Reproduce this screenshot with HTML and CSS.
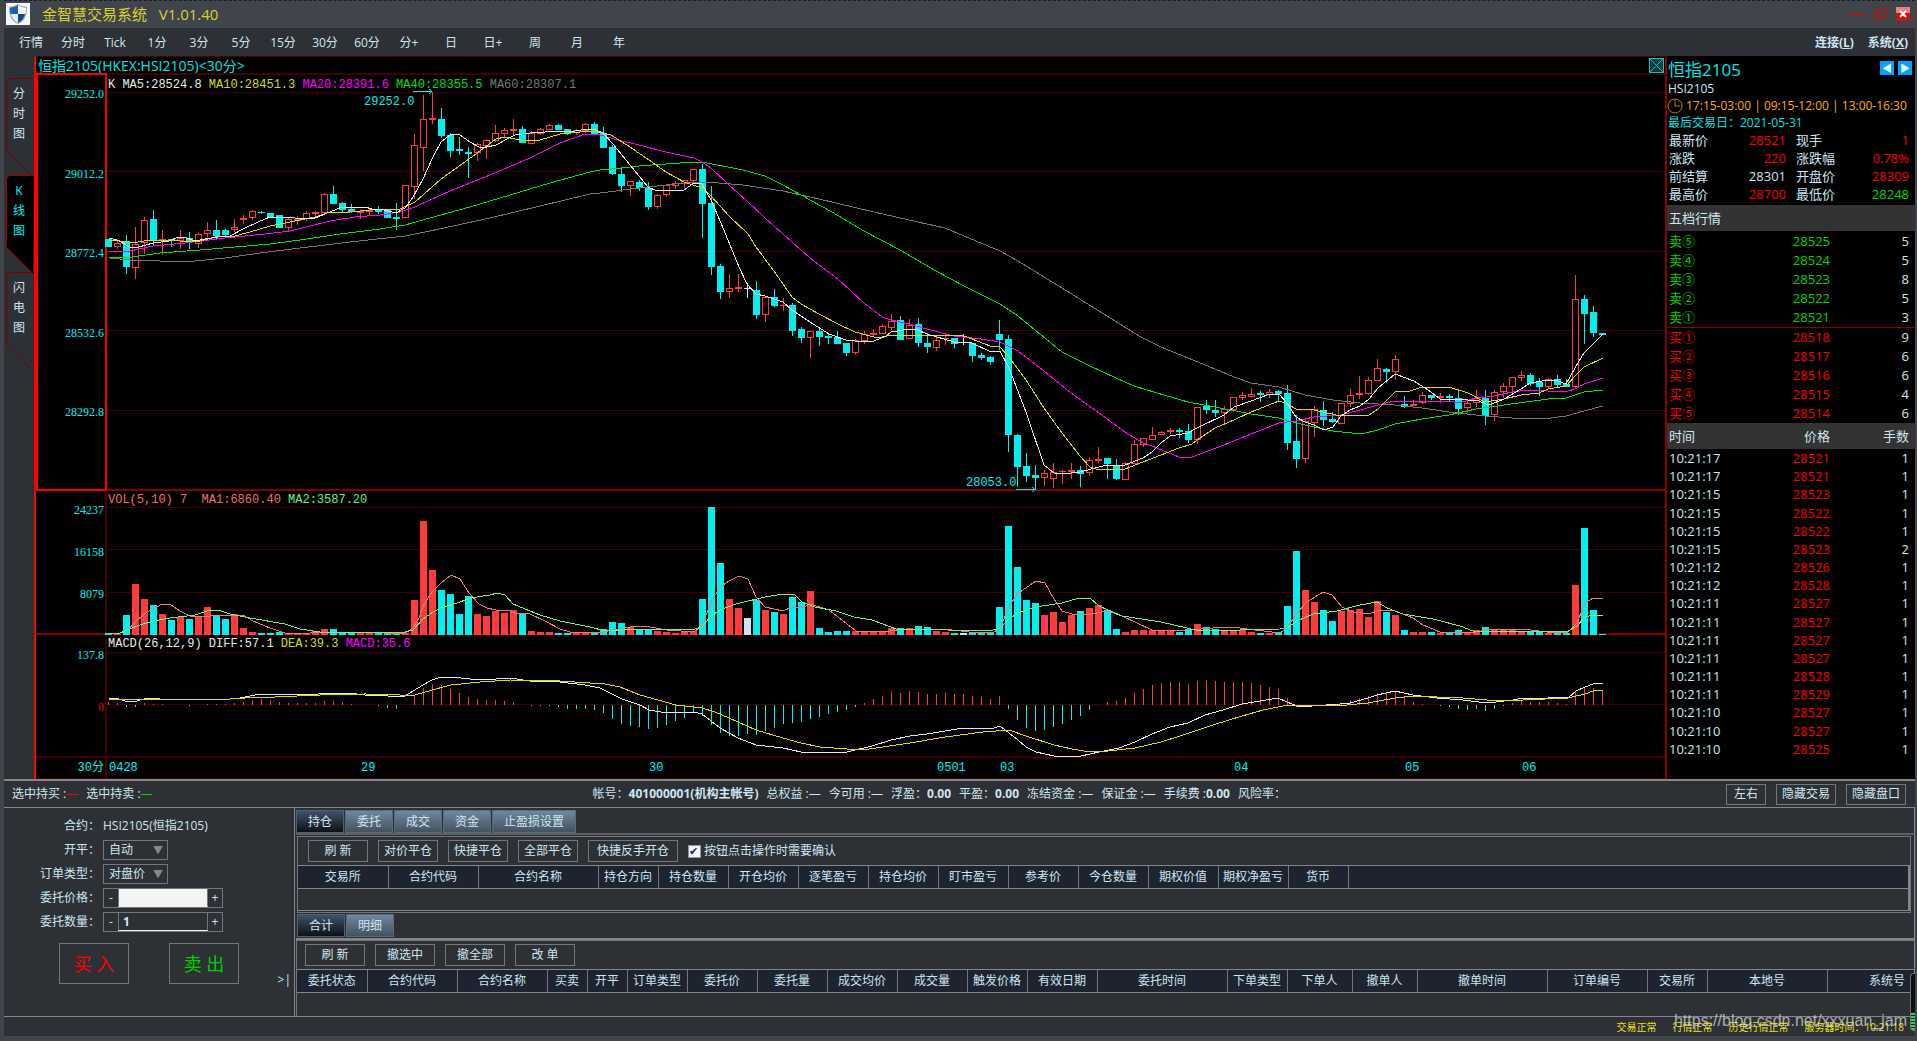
FILE: index.html
```html
<!DOCTYPE html>
<html lang="zh-CN">
<head>
    <meta charset="UTF-8">
    <meta name="viewport" content="width=device-width, initial-scale=1.0">
    <title>金智慧交易系统</title>
    <link rel="stylesheet" href="styles.css">
</head>
<body>
    <header class="titlebar">
        <svg class="logo" width="24" height="22" viewBox="0 0 24 22">
            <rect width="24" height="22" fill="#f4f6f8"/>
            <path d="M12 1 C9 3 6 3 3 4 C3 12 5 18 12 21 C19 18 21 12 21 4 C18 3 15 3 12 1Z" fill="#9aa7b4"/>
            <path d="M12 2 C9 4 7 4 4 5 C4 8 4 9 5 11 H12Z" fill="#1d5fae"/>
            <path d="M12 2 C15 4 17 4 20 5 C20 8 20 9 19 11 H12Z" fill="#f2f5f9"/>
            <path d="M12 11 H5 C6 15 8 18 12 20Z" fill="#e4ebf2"/>
            <path d="M12 11 H19 C18 15 16 18 12 20Z" fill="#16468c"/>
        </svg>
        <h1>金智慧交易系统 &nbsp; V1.01.40</h1>
        <div class="window-buttons">
            <button type="button" aria-label="最小化">
                <svg width="16" height="14"><path d="M0 8.5 H16" stroke="#e00000" stroke-width="1"/></svg>
            </button>
            <button type="button" aria-label="还原">
                <svg width="14" height="14" fill="none" stroke="#e00000"><path d="M3.5 6 V1.5 H12.5 V10.5 H8"/><rect x="1.5" y="6.5" width="6" height="6"/></svg>
            </button>
            <button type="button" aria-label="关闭">
                <svg width="14" height="14"><rect width="14" height="14" fill="#d01010"/><rect width="14" height="6" fill="#e88080"/><path d="M4 4 L10 10 M10 4 L4 10" stroke="#fff" stroke-width="2"/></svg>
            </button>
        </div>
    </header>

    <nav class="menubar">
        <div class="periods">
            <a href="#">行情</a><a href="#">分时</a><a href="#">Tick</a><a href="#">1分</a><a href="#">3分</a><a href="#">5分</a><a href="#">15分</a><a href="#">30分</a><a href="#">60分</a><a href="#">分+</a><a href="#">日</a><a href="#">日+</a><a href="#">周</a><a href="#">月</a><a href="#">年</a>
        </div>
        <div class="system-menu">
            <a href="#">连接(<u>L</u>)</a>
            <a href="#">系统(<u>X</u>)</a>
        </div>
    </nav>

    <main class="workspace">
        <div class="side-tabs">
            <button type="button" class="side-tab">
                <svg viewBox="0 0 28 100"><path d="M28 .5 H5 Q.5 .5 .5 5 V72 L27 99"/></svg>
                <span>分</span><span>时</span><span>图</span>
            </button>
            <button type="button" class="side-tab active">
                <svg viewBox="0 0 28 100"><path d="M28 .5 H5 Q.5 .5 .5 5 V72 L27 99"/></svg>
                <span>K</span><span>线</span><span>图</span>
            </button>
            <button type="button" class="side-tab">
                <svg viewBox="0 0 28 100"><path d="M28 .5 H5 Q.5 .5 .5 5 V72 L27 99"/></svg>
                <span>闪</span><span>电</span><span>图</span>
            </button>
        </div>

        <section class="chart">
            <div class="chart-title">
                <h2>恒指2105(HKEX:HSI2105)&lt;30分&gt;</h2>
                <button type="button" aria-label="关闭图表">
                    <svg width="15" height="15" fill="none" stroke="#00c8c8"><rect x=".5" y=".5" width="14" height="14" fill="#003c3c"/><path d="M1 1 L14 14 M14 1 L1 14"/></svg>
                </button>
            </div>
            <svg class="plot" id="plot" width="100%" height="706">
                <!-- 网格 -->
                <g class="grid">
                    <rect x="0" y="0" width="100%" height="2"/>
                    <rect x="71" y="19" width="100%" height="1"/>
                    <rect x="71" y="98" width="100%" height="1"/>
                    <rect x="71" y="178" width="100%" height="1"/>
                    <rect x="71" y="257" width="100%" height="1"/>
                    <rect x="71" y="337" width="100%" height="1"/>
                    <rect x="71" y="434" width="100%" height="1"/>
                    <rect x="71" y="476" width="100%" height="1"/>
                    <rect x="71" y="519" width="100%" height="1"/>
                    <rect x="71" y="579" width="100%" height="1"/>
                    <rect x="71" y="631" width="100%" height="1"/>
                    <rect x="0" y="683" width="100%" height="2"/>
                    <rect x="0" y="705" width="100%" height="1"/>
                    <rect x="69" y="418" width="2" height="288"/>
                </g>
                <g class="grid-strong">
                    <rect x="0" y="416" width="100%" height="2"/>
                    <rect x="0" y="560" width="100%" height="2"/>
                </g>
                <rect class="axis-box" x="1" y="1" width="69" height="416"/>

                <g class="scale">
                    <text x="68" y="25">29252.0</text>
                    <text x="68" y="105">29012.2</text>
                    <text x="68" y="184">28772.4</text>
                    <text x="68" y="264">28532.6</text>
                    <text x="68" y="343">28292.8</text>
                    <text x="68" y="441">24237</text>
                    <text x="68" y="483">16158</text>
                    <text x="68" y="525">8079</text>
                    <text x="68" y="586">137.8</text>
                    <text x="68" y="638" class="zero">0</text>
                </g>
                <g class="dates">
                    <text x="68" y="698" class="period">30分</text>
                    <text x="73" y="698">0428</text>
                    <text x="325" y="698">29</text>
                    <text x="613" y="698">30</text>
                    <text x="901" y="698">0501</text>
                    <text x="964" y="698">03</text>
                    <text x="1198" y="698">04</text>
                    <text x="1369" y="698">05</text>
                    <text x="1486" y="698">06</text>
                </g>

                <g class="legend">
                    <text x="72" y="15"><tspan class="t-white">K MA5:28524.8</tspan> <tspan class="t-yellow">MA10:28451.3</tspan> <tspan class="t-magenta">MA20:28391.6</tspan> <tspan class="t-green">MA40:28355.5</tspan> <tspan class="t-gray">MA60:28307.1</tspan></text>
                    <text x="72" y="430"><tspan class="t-vol1">VOL(5,10) 7&#160; MA1:6860.40</tspan> <tspan class="t-vol2">MA2:3587.20</tspan></text>
                    <text x="72" y="574"><tspan class="t-white">MACD(26,12,9) DIFF:57.1</tspan> <tspan class="t-yellow">DEA:39.3</tspan> <tspan class="t-magenta">MACD:35.6</tspan></text>
                </g>

                <!-- bars, candles and average lines are added by chart.js -->
                <g id="series" transform="translate(-36 -73)"></g>

                <g class="marks">
                    <text x="328" y="32">29252.0</text>
                    <path d="M377 18.5 H396 M393 16 L396 18.5 L393 21"/>
                    <text x="930" y="413">28053.0</text>
                    <path d="M980 416.5 H999 M996 414 L999 416.5 L996 419"/>
                </g>
            </svg>
        </section>

        <aside class="quote">
            <div class="quote-head">
                <h2>恒指2105</h2>
                <button type="button">◀</button>
                <button type="button">▶</button>
            </div>
            <p class="code">HSI2105</p>
            <p class="hours">
                <svg width="16" height="16" fill="none" stroke="#c08000"><circle cx="8" cy="8" r="7"/><path d="M8 2 V8 H13"/></svg>
                17:15-03:00 | 09:15-12:00 | 13:00-16:30
            </p>
            <p class="last-day">最后交易日：2021-05-31</p>
            <dl class="summary">
                <dt>最新价</dt><dd class="red">28521</dd><dt>现手</dt><dd class="red">1</dd>
                <dt>涨跌</dt><dd class="red">220</dd><dt>涨跌幅</dt><dd class="red">0.78%</dd>
                <dt>前结算</dt><dd>28301</dd><dt>开盘价</dt><dd class="red">28309</dd>
                <dt>最高价</dt><dd class="red">28700</dd><dt>最低价</dt><dd class="green">28248</dd>
            </dl>
            <h3>五档行情</h3>
            <table class="depth">
                <tbody class="sell">
                    <tr><td>卖⑤</td><td>28525</td><td>5</td></tr>
                    <tr><td>卖④</td><td>28524</td><td>5</td></tr>
                    <tr><td>卖③</td><td>28523</td><td>8</td></tr>
                    <tr><td>卖②</td><td>28522</td><td>5</td></tr>
                    <tr><td>卖①</td><td>28521</td><td>3</td></tr>
                </tbody>
                <tbody class="buy">
                    <tr><td>买①</td><td>28518</td><td>9</td></tr>
                    <tr><td>买②</td><td>28517</td><td>6</td></tr>
                    <tr><td>买③</td><td>28516</td><td>6</td></tr>
                    <tr><td>买④</td><td>28515</td><td>4</td></tr>
                    <tr><td>买⑤</td><td>28514</td><td>6</td></tr>
                </tbody>
            </table>
            <table class="ticks">
                <thead>
                    <tr><th>时间</th><th>价格</th><th>手数</th></tr>
                </thead>
                <tbody>
                    <tr><td>10:21:17</td><td>28521</td><td>1</td></tr>
                    <tr><td>10:21:17</td><td>28521</td><td>1</td></tr>
                    <tr><td>10:21:15</td><td>28523</td><td>1</td></tr>
                    <tr><td>10:21:15</td><td>28522</td><td>1</td></tr>
                    <tr><td>10:21:15</td><td>28522</td><td>1</td></tr>
                    <tr><td>10:21:15</td><td>28523</td><td>2</td></tr>
                    <tr><td>10:21:12</td><td>28526</td><td>1</td></tr>
                    <tr><td>10:21:12</td><td>28528</td><td>1</td></tr>
                    <tr><td>10:21:11</td><td>28527</td><td>1</td></tr>
                    <tr><td>10:21:11</td><td>28527</td><td>1</td></tr>
                    <tr><td>10:21:11</td><td>28527</td><td>1</td></tr>
                    <tr><td>10:21:11</td><td>28527</td><td>1</td></tr>
                    <tr><td>10:21:11</td><td>28528</td><td>1</td></tr>
                    <tr><td>10:21:11</td><td>28529</td><td>1</td></tr>
                    <tr><td>10:21:10</td><td>28527</td><td>1</td></tr>
                    <tr><td>10:21:10</td><td>28527</td><td>1</td></tr>
                    <tr><td>10:21:10</td><td>28525</td><td>1</td></tr>
                </tbody>
            </table>
        </aside>
    </main>

    <div class="account-bar">
        <div class="selected">
            <span>选中持买 :<i class="red">—</i></span>
            <span>选中持卖 :<i class="green">—</i></span>
        </div>
        <div class="account">
            <span>帐号：<b>401000001(机构主帐号)</b></span>
            <span>总权益 :—</span>
            <span>今可用 :—</span>
            <span>浮盈：<b>0.00</b></span>
            <span>平盈：<b>0.00</b></span>
            <span>冻结资金 :—</span>
            <span>保证金 :—</span>
            <span>手续费 :<b>0.00</b></span>
            <span>风险率：</span>
        </div>
        <div class="layout-buttons">
            <button type="button">左右</button>
            <button type="button">隐藏交易</button>
            <button type="button">隐藏盘口</button>
        </div>
    </div>

    <div class="trade">
        <form class="order">
            <div class="field">
                <span class="label">合约：</span>
                <span>HSI2105(恒指2105)</span>
            </div>
            <div class="field">
                <label for="offset">开平：</label>
                <div class="select"><select id="offset"><option>自动</option></select></div>
            </div>
            <div class="field">
                <label for="orderType">订单类型：</label>
                <div class="select"><select id="orderType"><option>对盘价</option></select></div>
            </div>
            <div class="field">
                <label for="price">委托价格：</label>
                <div class="stepper price"><button type="button">-</button><input type="text" id="price" value=""><button type="button">+</button></div>
            </div>
            <div class="field">
                <label for="volume">委托数量：</label>
                <div class="stepper"><button type="button">-</button><input type="text" id="volume" value="1"><button type="button">+</button></div>
            </div>
            <div class="order-buttons">
                <button type="button" class="btn-buy">买 入</button>
                <button type="button" class="btn-sell">卖 出</button>
            </div>
            <button type="button" class="collapse">&gt;|</button>
        </form>

        <div class="panels">
            <div class="tabs">
                <button type="button" class="tab active">持仓</button>
                <button type="button" class="tab">委托</button>
                <button type="button" class="tab">成交</button>
                <button type="button" class="tab">资金</button>
                <button type="button" class="tab wide">止盈损设置</button>
            </div>
            <div class="positions">
                <div class="toolbar">
                    <button type="button">刷 新</button>
                    <button type="button">对价平仓</button>
                    <button type="button">快捷平仓</button>
                    <button type="button">全部平仓</button>
                    <button type="button" class="long">快捷反手开仓</button>
                    <label class="confirm"><input type="checkbox" checked>按钮点击操作时需要确认</label>
                </div>
                <div class="table-box">
                    <table class="list">
                        <colgroup>
                            <col class="w90"><col class="w90"><col class="w120"><col class="w60"><col class="w70"><col class="w70"><col class="w70"><col class="w70"><col class="w70"><col class="w70"><col class="w70"><col class="w70"><col class="w70"><col class="w60"><col>
                        </colgroup>
                        <thead>
                            <tr><th>交易所</th><th>合约代码</th><th>合约名称</th><th>持仓方向</th><th>持仓数量</th><th>开仓均价</th><th>逐笔盈亏</th><th>持仓均价</th><th>盯市盈亏</th><th>参考价</th><th>今仓数量</th><th>期权价值</th><th>期权净盈亏</th><th>货币</th><th></th></tr>
                        </thead>
                    </table>
                </div>
            </div>
            <div class="tabs lower">
                <button type="button" class="tab active">合计</button>
                <button type="button" class="tab">明细</button>
            </div>
            <div class="orders">
                <div class="toolbar">
                    <button type="button">刷 新</button>
                    <button type="button">撤选中</button>
                    <button type="button">撤全部</button>
                    <button type="button">改 单</button>
                </div>
                <div class="table-scroll">
                    <table class="list orders-list">
                        <colgroup>
                            <col class="w70"><col class="w90"><col class="w90"><col class="w40"><col class="w40"><col class="w60"><col class="w70"><col class="w70"><col class="w70"><col class="w70"><col class="w60"><col class="w70"><col class="w130"><col class="w60"><col class="w65"><col class="w65"><col class="w130"><col class="w100"><col class="w60"><col class="w120"><col class="w120">
                        </colgroup>
                        <thead>
                            <tr><th>委托状态</th><th>合约代码</th><th>合约名称</th><th>买卖</th><th>开平</th><th>订单类型</th><th>委托价</th><th>委托量</th><th>成交均价</th><th>成交量</th><th>触发价格</th><th>有效日期</th><th>委托时间</th><th>下单类型</th><th>下单人</th><th>撤单人</th><th>撤单时间</th><th>订单编号</th><th>交易所</th><th>本地号</th><th>系统号</th></tr>
                        </thead>
                    </table>
                </div>
            </div>
        </div>
    </div>

    <footer class="statusbar">
        <span>交易正常</span>
        <span>行情正常</span>
        <span>历史行情正常</span>
        <span>服务器时间：10:21:18</span>
        <div class="watermark">https://blog.csdn.net/xxxuan_jam</div>
        <div class="meter"></div>
    </footer>

    <script src="chart.js"></script>
</body>
</html>
```

FILE: styles.css
```css
* {
    margin: 0;
    padding: 0;
    box-sizing: border-box;
}

body {
    font-family: "Open Sans", "Noto Sans CJK SC", sans-serif;
    font-size: 12px;
    line-height: 16px;
    color: #cfe6f2;
    background: #2d3035;
    min-height: 100vh;
    display: flex;
    flex-direction: column;
    border: 0 solid #40454c;
    border-width: 0 2px 5px 4px;
    overflow-x: hidden;
}

button, input, select {
    font: inherit;
    color: inherit;
    background: none;
    border: none;
    border-radius: 0;
}

button {
    cursor: pointer;
    white-space: nowrap;
}

a {
    color: inherit;
    text-decoration: none;
}

.red { color: #fa0000; }
.green { color: #00d800; }

/* title bar */
.titlebar {
    height: 28px;
    display: flex;
    align-items: center;
    background: #40454c;
    border-top: 1px dashed #1c1e22;
    padding: 0 5px 1px 2px;
}

.logo {
    margin-right: 12px;
}

.titlebar h1 {
    flex: 1;
    font-size: 15px;
    font-weight: normal;
    color: #dcd02c;
}

.window-buttons {
    display: flex;
    gap: 8px;
}

.window-buttons button, .chart-title button {
    display: flex;
}

.menubar {
    height: 28px;
    display: flex;
    align-items: center;
    justify-content: space-between;
    padding-top: 1px;
}

.periods {
    display: flex;
    padding-left: 6px;
}

.periods a {
    width: 42px;
    text-align: center;
}

.system-menu {
    display: flex;
    gap: 14px;
    padding-right: 7px;
    font-weight: bold;
}

/* workspace */
.workspace {
    flex: 1;
    display: flex;
    border-bottom: 2px solid #84878a;
}

.side-tabs {
    width: 30px;
    display: flex;
    flex-direction: column;
    padding: 22px 0 0 2px;
}

.side-tab {
    position: relative;
    height: 97px;
    display: flex;
    flex-direction: column;
    align-items: center;
    gap: 4px;
    padding: 8px 2px 0 0;
    width: 28px;
}

.side-tab svg {
    position: absolute;
    left: 0;
    top: 0;
    width: 28px;
    height: 100px;
    fill: #2d3035;
    stroke: #7c0000;
}

.side-tab span {
    position: relative;
}

.side-tab.active {
    color: #00f0f0;
    z-index: 1;
}

.side-tab.active svg {
    fill: #000;
    stroke: #a00000;
}

.chart {
    flex: 1;
    min-width: 0;
    background: #000;
    border-top: 1px solid #500000;
    border-left: 2px solid #f00;
    border-right: 2px solid #8b0000;
}

.chart-title {
    height: 16px;
    display: flex;
    align-items: center;
    justify-content: space-between;
    padding: 1px 1px 0 2px;
}

.chart-title h2 {
    font-size: 14px;
    font-weight: normal;
    color: #00e6e6;
}

.plot {
    display: block;
    font-family: "Liberation Mono", "Noto Sans CJK SC", monospace;
    font-size: 12px;
}

.grid { fill: #440000; }
.grid-strong { fill: #860000; }

.axis-box {
    fill: none;
    stroke: #f00;
    stroke-width: 2;
}

.scale text {
    font-family: "Liberation Serif", serif;
    fill: #00f0f0;
    text-anchor: end;
}

.scale .zero { fill: #f00000; }
.dates text, .marks text { fill: #00f0f0; }
.dates .period { text-anchor: end; }

.marks path {
    fill: none;
    stroke: #00f0f0;
}

.t-white { fill: #e8e8e8; }
.t-yellow { fill: #dcdc00; }
.t-magenta { fill: #f0f; }
.t-green { fill: #00e000; }
.t-gray { fill: #777; }
.t-vol1 { fill: #f07070; }
.t-vol2 { fill: #70f070; }

#series {
    shape-rendering: crispEdges;
}

#series polyline {
    fill: none;
    stroke-width: 1;
}

/* quote panel */
.quote {
    width: 248px;
    background: #000;
    font-size: 13px;
    line-height: 18px;
}

.quote-head {
    height: 25px;
    display: flex;
    align-items: center;
    gap: 4px;
    padding: 2px 3px 0 1px;
}

.quote-head h2 {
    flex: 1;
    font-size: 17px;
    font-weight: normal;
    color: #00e6e6;
}

.quote-head button {
    width: 14px;
    height: 14px;
    font-size: 10px;
    line-height: 14px;
    margin-bottom: 4px;
    background: #00a0ff;
    color: #e0f4ff;
}

.code, .last-day {
    font-size: 12px;
    line-height: 16px;
    padding-left: 1px;
}

.hours {
    display: flex;
    align-items: center;
    gap: 3px;
    font-size: 12px;
    line-height: 18px;
    color: #ffb000;
    white-space: nowrap;
}

.last-day {
    color: #00e6e6;
}

.summary {
    display: grid;
    grid-template-columns: 60px 57px 1fr 56px;
    padding: 0 6px 0 2px;
}

.summary dd {
    text-align: right;
}

.summary dt:nth-of-type(even) {
    padding-left: 10px;
}

.quote h3, .ticks th {
    height: 26px;
    font-size: 13px;
    font-weight: normal;
    background: #333;
}

.quote h3 {
    margin-top: 2px;
    padding: 4px 2px;
}

.depth, .ticks {
    width: 100%;
    border-collapse: collapse;
    table-layout: fixed;
}

.depth {
    height: 192px;
}

.depth tr > *, .ticks tr > * {
    text-align: right;
}

.depth tr > :first-child, .ticks tr > :first-child {
    text-align: left;
    padding-left: 2px;
}

.depth tr > :first-child {
    font-family: "Noto Sans CJK SC", sans-serif;
}

.depth tr > :nth-child(2), .ticks tr > :nth-child(2) {
    width: 80px;
}

.depth tr > :last-child, .ticks tr > :last-child {
    width: 85px;
    padding-right: 6px;
}

.sell td { color: #00d800; }

.buy td, .ticks td:nth-child(2) { color: #fa0000; }

.depth tr > td:last-child { color: #cfe6f2; }

.buy {
    border-top: 1px solid #8b0000;
}

.ticks {
    height: 335px;
}

/* account line */
.account-bar {
    height: 27px;
    display: flex;
    align-items: center;
    justify-content: space-between;
    padding: 0 9px 0 8px;
    border-bottom: 1px solid #84878a;
    white-space: nowrap;
}

.selected, .account {
    display: flex;
    gap: 8px;
}

.selected i {
    font-style: normal;
}

.layout-buttons {
    display: flex;
    gap: 10px;
}

.layout-buttons button {
    height: 21px;
    min-width: 40px;
    padding: 0 5px;
    border: 1px solid #74777a;
}

/* trade area */
.trade {
    height: 209px;
    display: flex;
    border-bottom: 1px solid #84878a;
}

.order {
    position: relative;
    width: 291px;
    border-right: 1px solid #84878a;
    padding-top: 6px;
}

.field {
    height: 24px;
    display: flex;
    align-items: center;
}

.field label, .field .label {
    width: 99px;
    padding-right: 3px;
    text-align: right;
}

.select {
    position: relative;
    width: 65px;
}

.select::after {
    content: "▼";
    position: absolute;
    right: 5px;
    top: 2px;
    font-size: 10px;
    color: #84878a;
    pointer-events: none;
}

.select select {
    appearance: none;
    width: 65px;
    height: 20px;
    padding-left: 5px;
    border: 1px solid #74777a;
}

.stepper {
    display: flex;
    height: 20px;
    border: 1px solid #74777a;
}

.stepper button {
    width: 14px;
}

.stepper input {
    width: 90px;
    padding: 0 4px;
    font-weight: bold;
    border-left: 1px solid #74777a;
    border-right: 1px solid #74777a;
    border-bottom: 1px solid #f4f4f4;
}

.price input {
    background: #f4f4f4;
}

.order-buttons {
    display: flex;
    gap: 40px;
    padding: 9px 0 0 55px;
}

.order-buttons button {
    width: 70px;
    height: 41px;
    font-size: 18px;
    border: 1px solid #74777a;
}

.btn-buy { color: #f00; }
.btn-sell { color: #00d000; }

.collapse {
    position: absolute;
    right: 3px;
    bottom: 28px;
}

.panels {
    flex: 1;
    min-width: 0;
    display: flex;
    flex-direction: column;
    padding-left: 1px;
    border-right: 1px solid #84878a;
}

.tabs {
    display: flex;
    gap: 1px;
    height: 27px;
    padding-top: 2px;
    border-bottom: 2px solid #5c5f63;
}

.tab {
    width: 48px;
    height: 23px;
    border: 1px solid #5c6a78;
    background: linear-gradient(#7088a0, #43525f);
}

.tab.active {
    background: linear-gradient(#40526a, #0e1116);
    border-color: #50606e;
}

.tab.wide {
    width: 84px;
}

.tabs.lower {
    padding: 1px 0 0 1px;
    border-bottom: 2px solid #84878a;
}

.positions {
    margin: 1px 3px 0 1px;
    border: 1px solid #74777a;
    padding-bottom: 1px;
}

.toolbar {
    display: flex;
    align-items: center;
    gap: 10px;
    height: 28px;
    padding-left: 10px;
}

.toolbar button {
    width: 60px;
    height: 22px;
    border: 1px solid #74777a;
}

.toolbar .long {
    width: 90px;
}

.confirm {
    display: flex;
    align-items: center;
    gap: 3px;
}

.confirm input {
    appearance: none;
    width: 13px;
    height: 13px;
    background: #f4f4f4;
    border: 1px solid #8c98a8;
}

.confirm input:checked::before {
    content: "✔";
    display: block;
    font: bold 11px/11px "DejaVu Sans", sans-serif;
    color: #1a2080;
}

.table-box {
    height: 46px;
    border: 1px solid #84878a;
    border-left: none;
    border-right-width: 2px;
}

.list {
    width: 100%;
    table-layout: fixed;
    border-collapse: collapse;
}

.list th {
    height: 22px;
    font-weight: normal;
    white-space: nowrap;
    background: #1e2330;
    border-right: 1px solid #74777a;
    border-bottom: 1px solid #84878a;
}

.table-box th:last-child {
    border-right: none;
}

.orders {
    flex: 1;
    border: 1px solid #74777a;
    border-right: none;
    border-bottom: none;
}

.orders .toolbar {
    height: 28px;
    padding-left: 8px;
}

.table-scroll {
    overflow: hidden;
    border-top: 1px solid #84878a;
}

.orders-list {
    width: 1650px;
}

.w40 { width: 40px; }
.w60 { width: 60px; }
.w65 { width: 65px; }
.w70 { width: 70px; }
.w90 { width: 90px; }
.w100 { width: 100px; }
.w120 { width: 120px; }
.w130 { width: 130px; }

.statusbar {
    position: relative;
    height: 19px;
    display: flex;
    align-items: center;
    justify-content: flex-end;
    gap: 16px;
    padding-right: 11px;
    font-size: 10px;
    color: #f0e020;
}

.watermark {
    position: absolute;
    right: 8px;
    bottom: 5px;
    font: 16px/20px "Liberation Sans", sans-serif;
    color: rgba(225, 228, 232, 0.7);
}

.meter {
    position: absolute;
    right: -2px;
    bottom: 5px;
    width: 7px;
    height: 58px;
    border: 1px solid #6c6f73;
    border-right: none;
    border-radius: 4px 0 0 4px;
    background: linear-gradient(#0c0d0f 0 38px, transparent 38px), repeating-linear-gradient(#30d060 0 2px, #0c3018 2px 3px);
}
```

FILE: chart.js
```javascript
const UP = '#ff3c3c';
const DOWN = '#00f0f0';
const FLAT = '#cfe6f2';
const FIRST = 108;
const STEP = 9;
const VOL_BASE = 635;
const MACD_ZERO = 705;

// 方向, 实体上沿, 实体下沿, 最高, 最低, 成交量, MACD
const bars = [
    ['d',239,247,239,247,2,3], ['u',243,247,241,249,1,2], ['d',241,267,235,274,20,-2], ['u',244,268,227,279,51,-2], ['u',220,243,217,254,36,2],
    ['d',219,240,210,245,30,1], ['u',239,241,230,255,21,1], ['d',239,241,239,247,15,0], ['u',238,241,230,249,18,0], ['d',238,243,232,249,16,-1],
    ['u',234,244,233,248,19,0], ['u',230,234,222,237,28,1], ['d',230,236,220,239,20,1], ['d',230,235,229,236,16,1], ['u',227,230,219,232,21,2],
    ['u',218,220,215,224,7,3], ['u',211,218,210,220,3,5], ['d',212,213,211,214,2,6], ['d',213,217,213,218,2,5], ['d',215,228,215,228,3,3],
    ['u',219,228,218,231,2,2], ['u',219,221,216,225,2,2], ['u',213,219,211,221,2,2], ['u',212,214,211,218,4,2], ['u',194,213,193,214,6,4],
    ['d',194,204,186,204,6,4], ['d',203,210,202,212,3,3], ['d',209,212,204,213,2,1], ['u',211,213,210,219,3,0], ['u',210,212,208,215,2,0],
    ['d',209,212,206,214,2,-1], ['d',210,218,210,218,2,-3], ['d',217,219,203,230,1,-4], ['u',185,218,185,218,2,0], ['u',145,187,134,199,35,9],
    ['u',119,148,95,171,114,17], ['u',118,120,92,124,65,21], ['d',119,136,108,138,45,20], ['d',135,151,133,157,41,16], ['d',149,151,137,155,21,12],
    ['d',152,154,147,178,39,8], ['u',144,153,143,161,21,6], ['u',140,146,139,159,19,5], ['u',133,141,125,142,24,5], ['u',130,134,128,138,22,4],
    ['u',129,131,119,135,25,3], ['d',129,143,126,143,21,0], ['u',133,144,131,144,4,-1], ['u',129,134,128,135,3,-1], ['u',125,130,124,130,3,-1],
    ['d',125,130,124,130,2,-2], ['d',129,134,129,135,2,-4], ['u',130,133,129,135,2,-4], ['u',124,131,123,133,2,-4], ['d',124,134,122,135,3,-5],
    ['d',133,148,127,148,6,-8], ['d',147,174,145,175,13,-14], ['d',174,186,167,192,12,-19], ['u',181,186,181,196,8,-21], ['d',182,188,180,191,5,-22],
    ['d',188,207,182,210,6,-24], ['u',195,207,194,209,4,-23], ['u',185,195,184,197,3,-20], ['u',183,186,181,189,2,-16], ['u',180,184,180,188,3,-13],
    ['u',169,181,169,183,4,-8], ['d',169,204,164,238,36,-11], ['d',203,267,186,275,128,-20], ['d',266,292,264,299,72,-28], ['u',288,292,274,298,36,-31],
    ['u',287,289,274,292,27,-31], ['f',288,289,283,298,17,-29], ['d',290,315,281,319,35,-30], ['u',297,315,297,322,25,-26], ['d',297,306,289,307,23,-23],
    ['u',305,306,298,311,21,-19], ['d',305,331,303,336,38,-18], ['d',329,338,327,343,33,-17], ['u',331,338,331,358,44,-14], ['d',331,337,328,346,7,-12],
    ['d',336,338,333,344,3,-9], ['d',337,344,331,344,4,-7], ['d',343,353,343,356,4,-5], ['u',340,353,339,355,4,-2], ['u',334,341,331,344,3,2],
    ['u',333,335,329,337,3,6], ['u',326,334,324,334,3,9], ['u',321,328,314,330,7,13], ['d',320,340,316,340,7,12], ['u',325,339,319,339,7,14],
    ['d',324,343,318,347,9,13], ['d',343,347,333,353,8,11], ['u',340,348,337,351,4,11], ['u',338,339,334,345,3,12], ['d',338,344,338,348,2,11],
    ['f',342,343,334,345,2,11], ['d',343,356,343,362,2,9], ['d',355,358,353,360,2,8], ['d',357,362,356,365,2,6], ['d',334,340,320,350,28,9],
    ['d',339,435,335,452,109,-4], ['d',435,467,434,487,68,-15], ['d',466,476,453,482,35,-23], ['d',475,478,465,490,32,-26], ['u',473,478,470,486,20,-25],
    ['u',472,479,463,488,23,-22], ['u',471,472,470,484,13,-19], ['u',470,472,463,479,20,-15], ['d',470,474,466,487,24,-11], ['u',460,473,457,476,27,-5],
    ['u',459,461,447,463,30,0], ['d',458,464,458,479,25,3], ['d',465,479,459,480,6,4], ['u',463,480,462,480,3,7], ['u',444,464,440,464,5,12],
    ['u',438,445,438,447,5,16], ['u',435,440,427,440,5,20], ['u',432,435,431,435,4,22], ['u',430,432,428,434,4,23], ['d',430,432,428,438,3,23],
    ['d',431,440,424,443,6,21], ['u',407,440,407,444,11,24], ['d',406,410,400,414,8,25], ['d',410,413,400,417,6,24], ['u',409,413,406,425,5,23],
    ['u',397,410,397,412,5,23], ['u',395,398,392,400,5,23], ['u',394,397,388,397,3,22], ['d',393,395,391,402,2,20], ['u',392,395,389,398,2,18],
    ['d',391,394,390,401,2,16], ['d',393,443,385,450,29,7], ['d',441,459,415,468,84,-2], ['u',421,459,418,463,45,-1], ['u',409,423,406,437,33,0],
    ['d',410,420,401,426,25,0], ['d',419,422,412,423,14,0], ['u',403,424,403,424,24,2], ['u',395,404,389,407,25,5], ['u',393,395,376,399,26,7],
    ['u',380,394,377,395,18,9], ['u',368,381,359,381,34,12], ['d',369,372,368,383,23,13], ['u',359,372,355,380,20,14], ['d',404,407,396,408,5,8],
    ['u',404,406,400,406,3,3], ['u',395,403,392,404,3,1], ['d',395,398,395,400,3,0], ['u',396,398,393,403,2,-1], ['d',396,398,394,401,2,-2],
    ['d',398,409,390,415,5,-4], ['u',403,408,400,413,2,-5], ['u',398,403,390,407,5,-4], ['d',398,416,390,425,8,-6], ['u',392,415,390,421,5,-4],
    ['u',386,392,383,398,5,-1], ['u',377,387,377,393,5,2], ['u',375,378,371,381,3,4], ['d',375,384,373,386,3,3], ['d',382,387,378,396,3,3],
    ['u',379,387,378,388,2,3], ['d',379,385,375,388,2,2], ['d',384,387,379,387,2,1], ['u',299,387,275,388,50,14], ['d',299,314,295,344,107,18],
    ['d',312,333,306,337,25,17], ['d',333,335,333,335,1,14]
];

const lines = [
    // MA60
    ['#777777', '110,258 130,260 160,261 195,261 225,258 260,253 300,248 350,242 405,236 430,231 490,218 540,206 590,194 600,193 639,188 675,184 694,182 707,182 743,185 783,191 819,199 874,212 918,222 945,228 964,236 1000,251 1018,261 1062,288 1107,316 1139,336 1161,347 1188,358 1215,369 1234,377 1251,383 1279,387 1305,395 1333,400 1360,403 1378,404 1395,405 1422,408 1449,412 1485,416 1512,418 1543,419 1566,416 1584,411 1603,406'],
    // MA40
    ['#00e600', '109,257 132,257 160,253 200,250 270,244 300,240 340,234 380,229 405,225 430,218 470,207 500,198 550,183 590,172 600,170 621,168 639,166 666,164 694,162 707,163 743,170 765,176 783,185 801,195 832,212 864,231 900,250 936,271 964,286 1000,304 1018,316 1035,330 1062,352 1090,366 1116,378 1134,386 1157,393 1188,402 1215,407 1251,414 1279,418 1296,423 1333,431 1361,434 1378,430 1395,424 1422,419 1449,415 1476,409 1504,405 1548,399 1566,398 1584,392 1603,390'],
    // MA20
    ['#ff00ff', '109,252 130,251 153,246 185,243 225,238 265,234 290,231 310,226 330,221 355,217 380,215 400,212 415,207 430,200 450,191 490,175 530,158 560,143 585,134 600,135 618,140 639,145 666,152 694,158 702,162 711,168 729,185 747,201 765,218 783,234 810,258 838,279 864,303 882,317 891,320 909,324 927,329 954,336 981,339 1000,342 1018,351 1044,371 1071,393 1099,413 1125,432 1143,443 1152,446 1179,457 1192,457 1224,445 1251,434 1279,423 1296,421 1314,417 1341,415 1360,410 1378,405 1394,401 1449,401 1459,403 1476,398 1494,396 1512,392 1529,390 1548,391 1568,391 1575,389 1584,384 1603,378'],
    // MA10
    ['#dcdc00', '109,240 120,241 132,243 150,240 180,241 192,242 200,241 215,237 235,236 250,232 270,226 290,222 315,217 330,212 350,212 370,210 400,209 415,202 441,179 469,159 496,139 505,137 520,140 530,141 540,140 560,134 590,131 603,133 611,135 630,147 649,160 666,172 684,182 702,188 711,196 729,216 748,234 756,247 774,271 792,297 801,304 819,314 838,324 855,332 874,337 882,337 891,335 918,335 927,336 945,335 964,336 972,339 990,346 1000,347 1009,357 1026,380 1044,408 1062,433 1080,456 1090,467 1096,469 1121,469 1125,469 1143,462 1161,455 1179,448 1192,444 1197,440 1215,428 1234,420 1251,412 1279,401 1287,404 1296,409 1314,410 1336,415 1369,415 1378,409 1395,392 1410,391 1422,387 1449,387 1468,393 1485,402 1504,399 1521,395 1539,393 1548,389 1566,386 1575,376 1584,367 1603,358'],
    // MA5
    ['#e8e8e8', '109,238 117,240 130,247 139,247 153,243 169,241 178,237 184,237 195,241 205,239 225,236 230,236 245,228 258,222 270,217 295,218 315,218 325,214 342,207 365,207 372,209 384,210 396,213 405,208 413,197 423,179 433,157 441,142 451,134 460,135 470,142 479,147 487,147 496,145 507,139 515,135 530,133 545,132 560,131 575,131 587,129 596,130 603,133 613,144 630,165 648,187 657,191 684,190 694,183 702,184 711,200 721,223 739,267 747,284 756,294 765,296 783,302 792,310 810,322 829,334 846,340 855,341 874,341 886,336 891,332 909,329 918,330 927,334 954,342 972,343 991,352 1000,351 1009,368 1026,412 1044,465 1054,473 1062,474 1080,472 1099,467 1107,465 1116,466 1125,465 1143,458 1152,452 1161,443 1170,436 1188,433 1197,428 1224,415 1234,407 1251,401 1270,394 1279,394 1287,403 1296,417 1305,422 1314,425 1324,430 1333,427 1341,416 1350,410 1360,406 1369,399 1378,388 1395,374 1414,381 1431,392 1440,399 1459,399 1468,400 1476,400 1489,405 1504,399 1521,389 1530,383 1548,380 1558,381 1566,384 1575,368 1584,353 1593,344 1603,334'],
    // VOL MA1
    ['#f07878', '109,633 120,633 128,630 137,620 147,612 157,607 162,604 171,605 180,611 190,616 200,617 220,615 243,615 253,621 270,628 285,633 310,633 320,632 365,632 385,633 405,633 413,628 419,618 423,606 432,592 441,583 451,575 460,579 469,593 479,604 487,608 496,610 507,610 515,613 530,614 545,621 560,629 570,632 600,633 612,630 625,628 635,626 650,627 667,630 694,632 702,626 711,602 720,587 729,581 739,576 748,579 756,597 765,607 783,611 792,607 804,607 810,604 829,610 856,631 890,631 911,629 944,629 969,632 994,632 1000,628 1009,607 1017,594 1036,581 1045,583 1054,599 1062,611 1072,614 1086,615 1108,611 1122,616 1152,630 1176,631 1213,628 1233,627 1247,629 1280,633 1287,628 1297,613 1307,602 1323,592 1332,595 1342,607 1353,612 1368,614 1380,610 1395,611 1413,618 1423,625 1440,632 1470,633 1493,629 1523,629 1547,632 1568,632 1577,623 1585,603 1593,598 1603,598'],
    // VOL MA2
    ['#78f078', '109,633 120,633 137,626 153,621 170,618 195,615 210,610 218,610 230,614 250,618 285,624 300,629 320,632 405,632 413,630 423,619 433,612 441,608 460,602 470,598 490,595 497,593 505,595 513,604 525,609 540,615 560,621 590,627 605,631 640,629 695,629 702,627 711,616 720,610 736,604 765,597 783,594 794,594 802,602 815,607 836,611 854,617 872,620 899,630 926,629 947,630 990,631 1000,628 1009,619 1018,613 1036,607 1062,603 1079,598 1090,598 1099,606 1122,616 1161,622 1200,631 1280,629 1287,628 1297,621 1313,614 1337,611 1360,605 1377,602 1387,608 1403,614 1433,619 1460,626 1473,631 1568,631 1577,626 1585,617 1593,615 1603,615'],
    // DIFF
    ['#e8e8e8', '109,698 119,699 125,701 137,701 147,698 160,699 185,699 195,700 230,699 240,698 255,695 275,694 300,695 318,694 330,693 348,693 365,695 380,695 396,697 405,696 413,691 423,685 432,680 441,677 451,677 470,679 496,679 510,678 530,681 560,682 585,685 600,688 622,699 640,705 649,710 661,712 694,712 702,714 720,728 738,738 756,745 783,748 801,752 847,752 872,746 891,740 910,736 927,734 945,731 963,728 994,728 1000,726 1009,733 1018,740 1026,747 1036,752 1054,756 1081,756 1099,752 1119,748 1135,742 1152,734 1170,727 1188,723 1205,715 1223,710 1242,704 1260,701 1278,698 1287,702 1297,706 1312,706 1340,704 1350,703 1368,698 1377,695 1395,691 1413,695 1437,698 1463,700 1487,703 1513,700 1523,698 1543,699 1553,697 1568,698 1576,691 1585,687 1593,684 1603,683'],
    // DEA
    ['#dcdc00', '109,699 230,699 245,698 275,697 320,695 365,694 400,695 415,695 432,690 451,685 480,682 510,680 560,681 590,683 605,684 620,687 640,695 658,700 676,705 702,708 715,712 729,718 756,730 783,738 801,743 820,747 847,749 869,749 910,743 945,737 983,732 1009,730 1026,736 1054,745 1072,749 1090,752 1108,751 1135,748 1161,742 1180,736 1213,725 1242,716 1263,710 1283,706 1313,705 1347,705 1368,703 1395,698 1413,696 1437,697 1463,698 1487,700 1523,700 1568,698 1585,694 1593,691 1603,690']
];

const series = document.getElementById('series');

function add(name, attrs) {
    const el = document.createElementNS('http://www.w3.org/2000/svg', name);
    for (const key in attrs) {
        el.setAttribute(key, attrs[key]);
    }
    series.appendChild(el);
}

function rect(x, y, width, height, fill) {
    add('rect', { x, y, width, height, fill });
}

bars.forEach(([dir, top, bottom, high, low, vol, macd], i) => {
    const x = FIRST + i * STEP;
    const color = dir === 'u' ? UP : dir === 'd' ? DOWN : FLAT;

    // K线
    rect(x, high, 1, low - high, color);
    rect(x - 3, top, 7, bottom - top, color);
    if (dir === 'u' && bottom - top > 2) {
        rect(x - 2, top + 1, 5, bottom - top - 2, '#000');
    }

    // 成交量
    rect(x - 3, VOL_BASE - vol, 7, vol, color);

    // MACD
    if (macd > 0) {
        rect(x, MACD_ZERO - macd, 1, macd, UP);
    } else if (macd < 0) {
        rect(x, MACD_ZERO, 1, -macd, DOWN);
    }
});

lines.forEach(([stroke, points]) => add('polyline', { stroke, points }));
```
